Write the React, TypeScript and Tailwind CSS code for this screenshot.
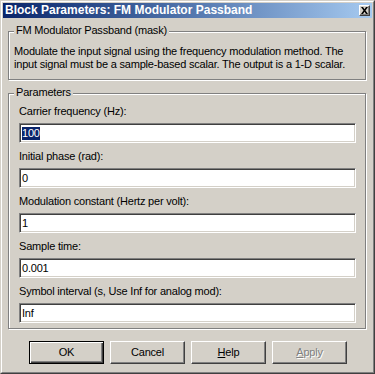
import React from "react";

const face = { fontFamily: '"Liberation Sans", Arial, sans-serif' };

const params = [
  { label: "Carrier frequency (Hz):", value: "100", selected: true },
  { label: "Initial phase (rad):", value: "0" },
  { label: "Modulation constant (Hertz per volt):", value: "1" },
  { label: "Sample time:", value: "0.001" },
  { label: "Symbol interval (s, Use Inf for analog mod):", value: "Inf" },
];

function GroupBox({
  title,
  className,
  children,
}: {
  title: string;
  className: string;
  children: React.ReactNode;
}) {
  return (
    <div
      className={`relative ml-[5px] w-[358px] border border-[#808080] shadow-[1px_1px_0_#ffffff,inset_1px_1px_0_#ffffff] ${className}`}
    >
      <span className="absolute left-[5px] top-[-8px] bg-[#d4d0c8] px-[2px] leading-[13px]">
        {title}
      </span>
      {children}
    </div>
  );
}

function Field({ label, value, selected }: { label: string; value: string; selected?: boolean }) {
  return (
    <div className="flex flex-col">
      <div className="pl-[10px] leading-[13px]">{label}</div>
      <div className="ml-[10px] mt-[5px] flex h-[20px] w-[337px] items-center border border-t-[#808080] border-l-[#808080] border-b-white border-r-white bg-white pl-[2px] shadow-[inset_1px_1px_0_#404040,inset_-1px_-1px_0_#d4d0c8]">
        {selected ? (
          <span className="bg-[#0a246a] leading-[13px] text-white">{value}</span>
        ) : (
          <span className="leading-[13px]">{value}</span>
        )}
      </div>
    </div>
  );
}

function Button({
  children,
  primary,
  disabled,
}: {
  children: React.ReactNode;
  primary?: boolean;
  disabled?: boolean;
}) {
  const edge = primary
    ? "border border-black shadow-[inset_1px_1px_0_#ffffff,inset_-1px_-1px_0_#404040,inset_-2px_-2px_0_#808080]"
    : "border border-t-white border-l-white border-b-[#404040] border-r-[#404040] shadow-[inset_-1px_-1px_0_#808080]";
  return (
    <div
      className={`flex h-[23px] w-[75px] items-center justify-center bg-[#d4d0c8] ${edge} ${
        disabled ? "text-[#808080] [text-shadow:1px_1px_0_#ffffff]" : "text-black"
      }`}
    >
      {children}
    </div>
  );
}

export default function App() {
  return (
    <div
      className="h-[374px] w-[375px] border border-t-[#d4d0c8] border-l-[#d4d0c8] border-b-[#404040] border-r-[#404040] bg-[#d4d0c8] text-[11px] tracking-[-0.2px] text-black"
      style={face}
    >
      <div className="h-full border border-t-white border-l-white border-b-[#808080] border-r-[#808080] p-px">
        <div className="flex h-[15px] items-center justify-between bg-gradient-to-r from-[#0a246a] to-[#a6caf0] pl-[2px] pr-[2px]">
          <span className="text-[12px] font-bold leading-[15px] tracking-normal text-white">
            Block Parameters: FM Modulator Passband
          </span>
          <div className="flex h-[11px] w-[11px] items-center justify-center border border-t-white border-l-white border-b-[#404040] border-r-[#404040] bg-[#d4d0c8] shadow-[inset_-1px_-1px_0_#808080]">
            <svg width="7" height="7" viewBox="0 0 7 7" className="mb-px">
              <path d="M0 0h2l1.5 2.2L5 0h2L4.5 3.5L7 7H5L3.5 4.8L2 7H0l2.5-3.5z" fill="#000" />
            </svg>
          </div>
        </div>

        <GroupBox title="FM Modulator Passband (mask)" className="mt-[13px] h-[49px]">
          <div className="pl-[5px] pt-[13px] leading-[13px]">
            Modulate the input signal using the frequency modulation method. The
            <br />
            input signal must be a sample-based scalar. The output is a 1-D scalar.
          </div>
        </GroupBox>

        <GroupBox title="Parameters" className="mt-[13px] h-[236px]">
          <div className="flex flex-col gap-[7px] pt-[11px]">
            {params.map((p) => (
              <Field key={p.label} label={p.label} value={p.value} selected={p.selected} />
            ))}
          </div>
        </GroupBox>

        <div className="ml-[26px] mt-[12px] flex gap-[6px]">
          <Button primary>OK</Button>
          <Button>Cancel</Button>
          <Button>
            <span>
              <span className="underline">H</span>elp
            </span>
          </Button>
          <Button disabled>
            <span>
              <span className="underline">A</span>pply
            </span>
          </Button>
        </div>
      </div>
    </div>
  );
}
